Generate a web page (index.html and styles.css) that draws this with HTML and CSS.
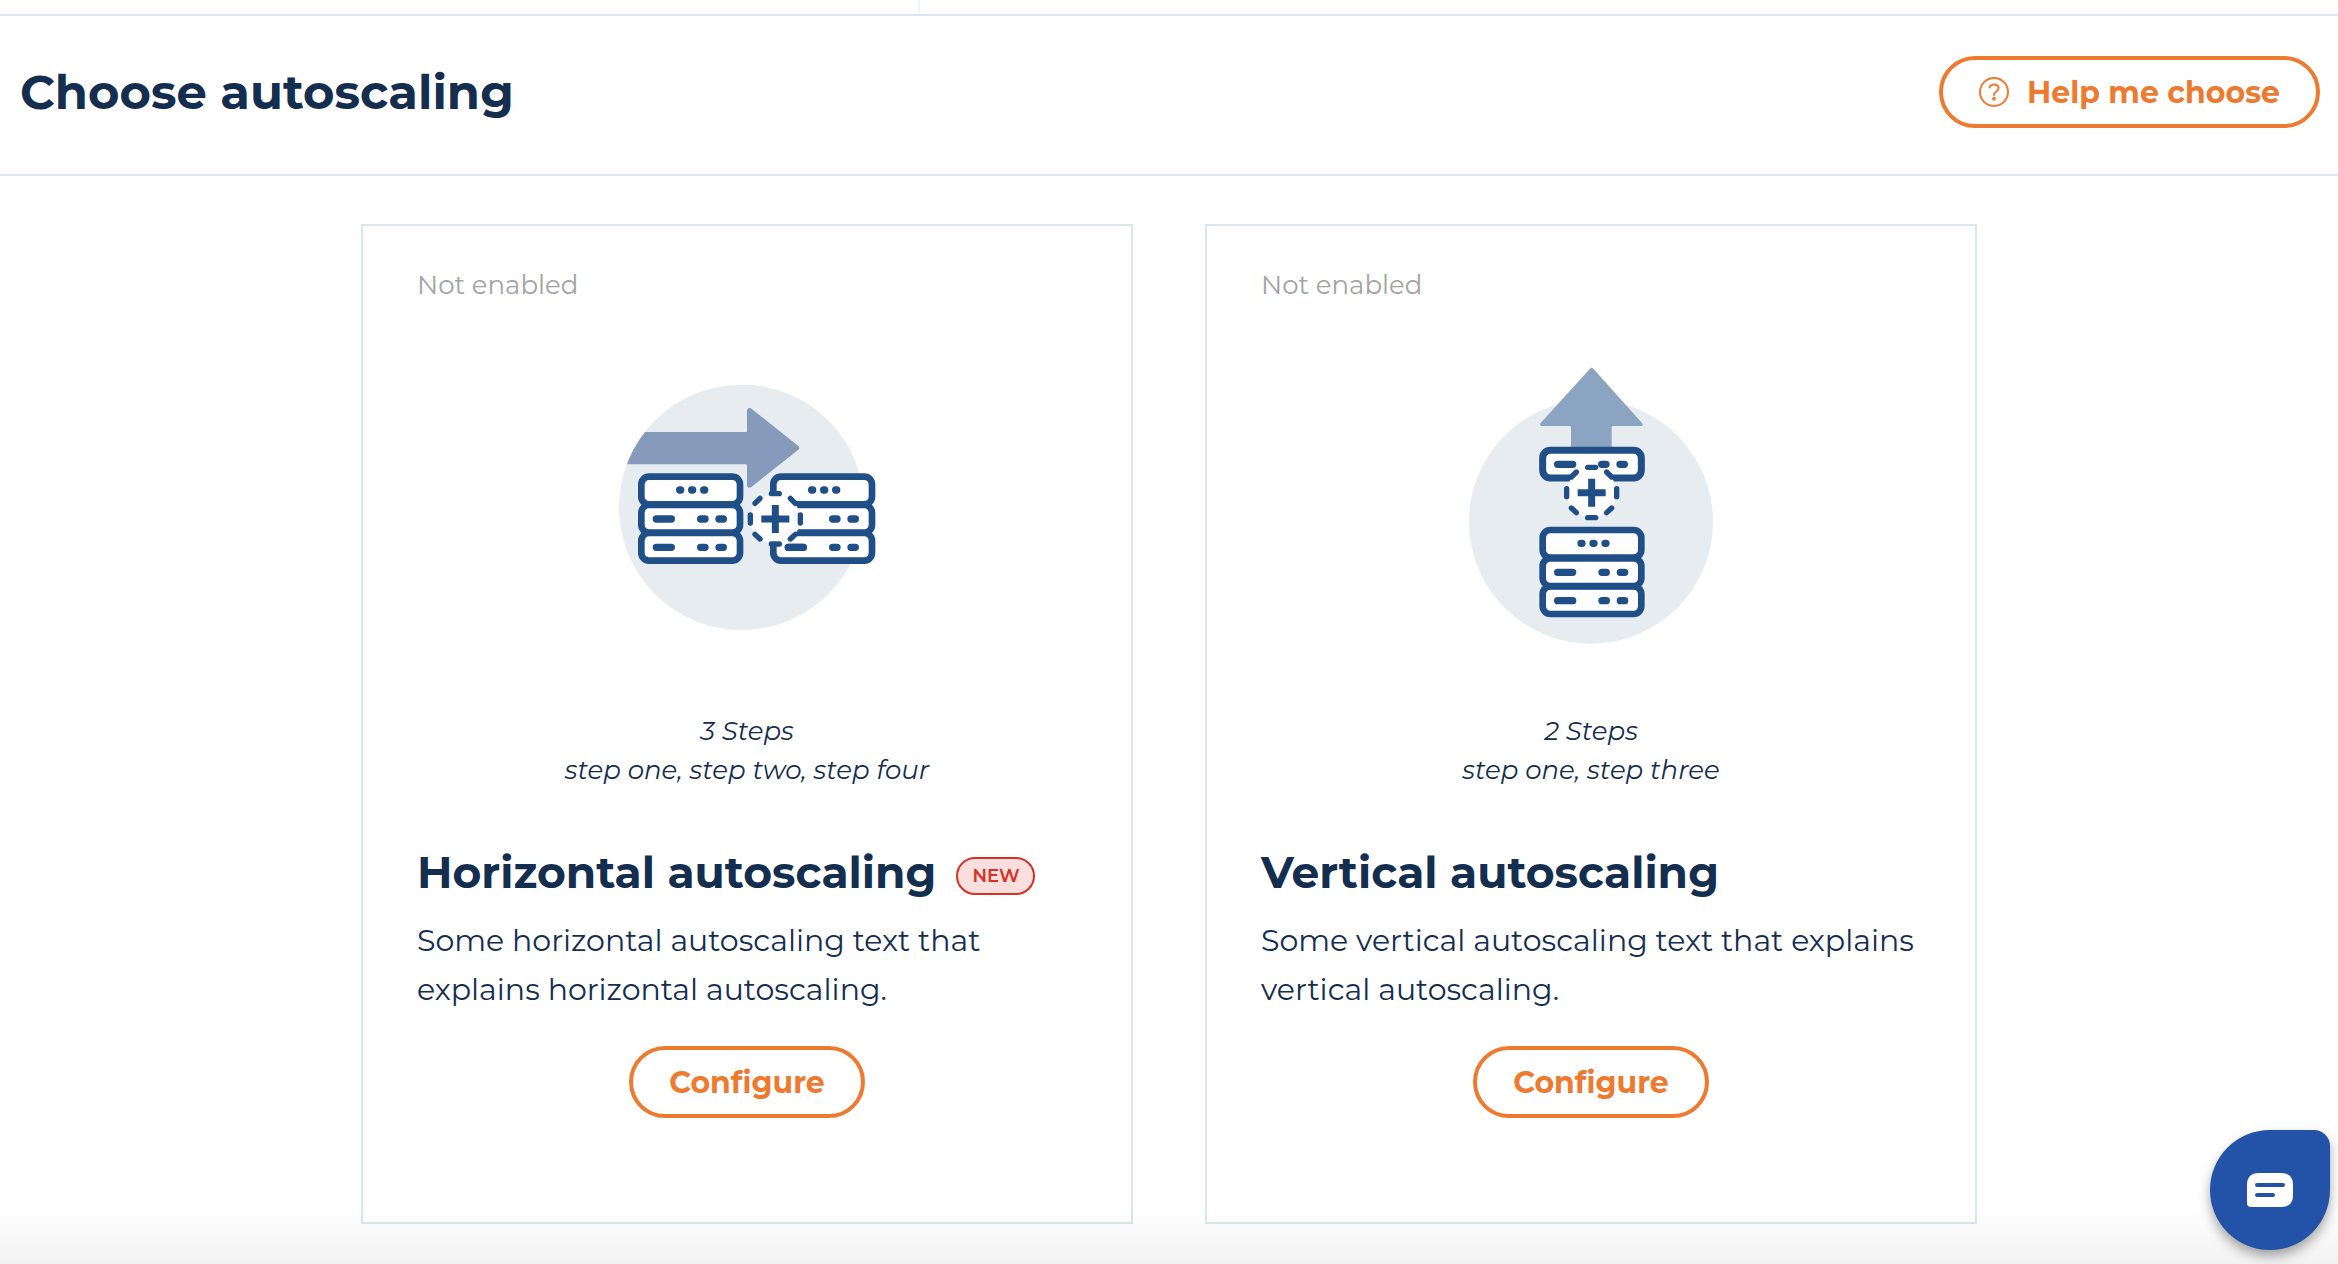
FILE: index.html
```html
<!DOCTYPE html>
<html lang="en">
<head>
<meta charset="utf-8">
<meta name="viewport" content="width=device-width, initial-scale=1">
<title>Choose autoscaling</title>
<link rel="stylesheet" href="styles.css">
</head>
<body>
<svg class="sprite" aria-hidden="true">
  <symbol id="unit-frame" viewBox="0 0 318 104" overflow="visible">
    <rect x="11" y="11" width="296" height="83" rx="23" fill="#fff" stroke="#204e87" stroke-width="21"/>
  </symbol>
  <symbol id="server" viewBox="0 0 318 274" overflow="visible">
    <g fill="#fff" stroke="#204e87" stroke-width="20">
      <rect x="11" y="180" width="296" height="83" rx="23"/>
      <rect x="11" y="96" width="296" height="83" rx="23"/>
      <rect x="11" y="11" width="296" height="83" rx="23"/>
    </g>
    <g fill="none" stroke="#204e87" stroke-width="22" stroke-linecap="round">
      <path d="M126 51h3M162 51h3M198 51h3M189 138h13M244 138h13M56 223h45M189 223h13M244 223h13"/>
    </g>
  </symbol>
  <symbol id="plus" viewBox="0 0 170 170" overflow="visible">
    <circle cx="85" cy="85" r="75" fill="#fff"/>
    <g fill="none" stroke="#204e87" stroke-width="16" stroke-linecap="round">
      <path d="M73 9h24M73 160h24M10 73v24M160 73v24M24 38l15-15M130 23l15 15M24 131l15 14M130 145l15-14"/>
      <path d="M85 43v84M43 85h84" stroke-width="21" stroke-linecap="butt"/>
    </g>
  </symbol>
</svg>

<div class="tabs"><div class="tab"></div></div>

<header class="page-header">
  <h1 class="page-title">Choose autoscaling</h1>
  <button class="button" type="button">
    <svg class="help-icon" viewBox="0 0 30 30" fill="none" stroke="currentColor" stroke-width="2" stroke-linecap="round" aria-hidden="true">
      <circle cx="15" cy="15" r="14"/>
      <path d="M10.500 10.500c.6-2 2.300-2.900 4.500-2.900 2.700 0 4.600 1.300 4.600 3.500 0 3.300-4.600 3.200-4.600 7"/>
      <circle cx="15" cy="21.700" r="1.900" fill="currentColor" stroke="none"/>
    </svg>
    Help me choose
  </button>
</header>

<main class="cards">
  <section class="card">
    <p class="status">Not enabled</p>
    <svg class="illustration" viewBox="-6 -30 900 930" aria-hidden="true">
      <clipPath id="disc"><circle cx="428" cy="442" r="368"/></clipPath>
      <circle cx="428" cy="442" r="368" fill="#e7ecf0"/>
      <path clip-path="url(#disc)" fill="#869bbb" d="M40 216H440q4 0 4-4V150q2-9 12-5L598 258q6 6 0 11L456 382q-10 4-12-3V317q0-4-4-4H40z"/>
      <use href="#server" x="116" y="339" width="318" height="274"/>
      <use href="#server" x="512" y="339" width="318" height="274"/>
      <use href="#plus" x="444" y="392" width="170" height="170"/>
      <path d="M172 477h45M568 562h45" stroke="#204e87" stroke-width="22" stroke-linecap="round"/>
    </svg>
    <p class="steps">3 Steps<br>step one, step two, step four</p>
    <h2 class="card-title">Horizontal autoscaling <span class="badge">NEW</span></h2>
    <p class="description">Some horizontal autoscaling text that explains horizontal autoscaling.</p>
    <button class="button" type="button">Configure</button>
  </section>

  <section class="card">
    <p class="status">Not enabled</p>
    <svg class="illustration" viewBox="-24 0 900 930" aria-hidden="true">
      <circle cx="426" cy="515" r="366" fill="#e7ecf0"/>
      <path fill="#8ba4c1" d="M366 300V232q0-4-4-4H278q-8-2-3-9L423 56q5-5 10 0L579 219q5 7-2 9H492q-4 0-4 4V300z"/>
      <use href="#unit-frame" x="270" y="290" width="318" height="104"/>
      <use href="#server" x="270" y="529" width="318" height="274"/>
      <use href="#plus" x="343" y="343" width="170" height="170"/>
      <path d="M326 343h45M458 343h13M513 343h13M326 667h45" stroke="#204e87" stroke-width="22" stroke-linecap="round"/>
    </svg>
    <p class="steps">2 Steps<br>step one, step three</p>
    <h2 class="card-title">Vertical autoscaling</h2>
    <p class="description">Some vertical autoscaling text that explains vertical autoscaling.</p>
    <button class="button" type="button">Configure</button>
  </section>
</main>

<div class="bottom-shade"></div>
<button class="chat" type="button" aria-label="Open chat">
  <svg class="chat-icon" viewBox="0 0 46 34" aria-hidden="true">
    <path fill="#fff" d="M12 0H34Q46 0 46 12V22Q46 34 34 34H4Q0 34 0 30V12Q0 0 12 0z"/>
    <path d="M10 12H36M10 22H26" stroke="#2353a8" stroke-width="4" stroke-linecap="round"/>
  </svg>
</button>
</body>
</html>
```
FILE: styles.css
```css
* {
  box-sizing: border-box;
}

body {
  margin: 0;
  min-height: 100vh;
  background: #fff;
  color: #142e50;
  font-family: Montserrat, Inter, sans-serif;
}

h1,
h2,
p {
  margin: 0;
}

.sprite {
  position: absolute;
  width: 0;
  height: 0;
}

.tabs {
  display: flex;
  height: 16px;
  border-bottom: 2px solid #dce6f2;
}

.tab {
  width: 920px;
  border-right: 2px solid #f1f5fb;
}

.page-header {
  display: flex;
  align-items: center;
  justify-content: space-between;
  padding: 40px 18px 46px 20px;
  border-bottom: 2px solid #dce6f2;
}

.page-title {
  font-size: 48px;
  line-height: 72px;
  font-weight: 700;
}

.button {
  display: inline-flex;
  align-items: center;
  justify-content: center;
  gap: 18px;
  height: 72px;
  padding: 0 36px;
  border: 4px solid #ee7a30;
  border-radius: 36px;
  background: #fff;
  color: #ee7a30;
  font: inherit;
  font-size: 30px;
  font-weight: 700;
  cursor: pointer;
}

.help-icon {
  width: 30px;
  height: 30px;
}

.cards {
  display: grid;
  grid-template-columns: repeat(2, minmax(0, 1fr));
  gap: 72px;
  max-width: 1616px;
  margin: 0 auto;
  padding: 48px 0 40px;
}

.card {
  display: flex;
  flex-direction: column;
  align-items: center;
  padding: 40px 54px 104px;
  border: 2px solid #dce6f2;
}

.status {
  align-self: stretch;
  color: #a3a3a3;
  font-size: 26px;
  line-height: 39px;
}

.illustration {
  width: 300px;
  height: 310px;
  margin-top: 45px;
}

.steps {
  margin-top: 52px;
  font-size: 26px;
  line-height: 39px;
  font-style: italic;
  text-align: center;
}

.card-title {
  display: flex;
  align-items: center;
  align-self: stretch;
  gap: 20px;
  margin-top: 52px;
  font-size: 44px;
  line-height: 60px;
  font-weight: 700;
}

.badge {
  margin-top: 8px;
  padding: 0 14px;
  border: 2px solid #d93025;
  border-radius: 19px;
  background: #fadfde;
  color: #d93025;
  font-size: 18px;
  line-height: 34px;
  font-weight: 600;
}

.description {
  align-self: stretch;
  margin-top: 14px;
  font-size: 30px;
  line-height: 49px;
}

.card .button {
  margin-top: 32px;
}

.bottom-shade {
  position: fixed;
  right: 0;
  bottom: 0;
  left: 0;
  height: 56px;
  background: linear-gradient(rgba(0, 0, 0, 0), rgba(0, 0, 0, 0.05));
  pointer-events: none;
}

.chat {
  position: fixed;
  right: 8px;
  bottom: 14px;
  display: flex;
  align-items: center;
  justify-content: center;
  width: 120px;
  height: 120px;
  padding: 0;
  border: 0;
  border-radius: 60px 16px 60px 60px;
  background: #2353a8;
  box-shadow: 0 6px 12px rgba(0, 0, 0, 0.35);
  cursor: pointer;
}

.chat-icon {
  width: 46px;
  height: 34px;
}
```
